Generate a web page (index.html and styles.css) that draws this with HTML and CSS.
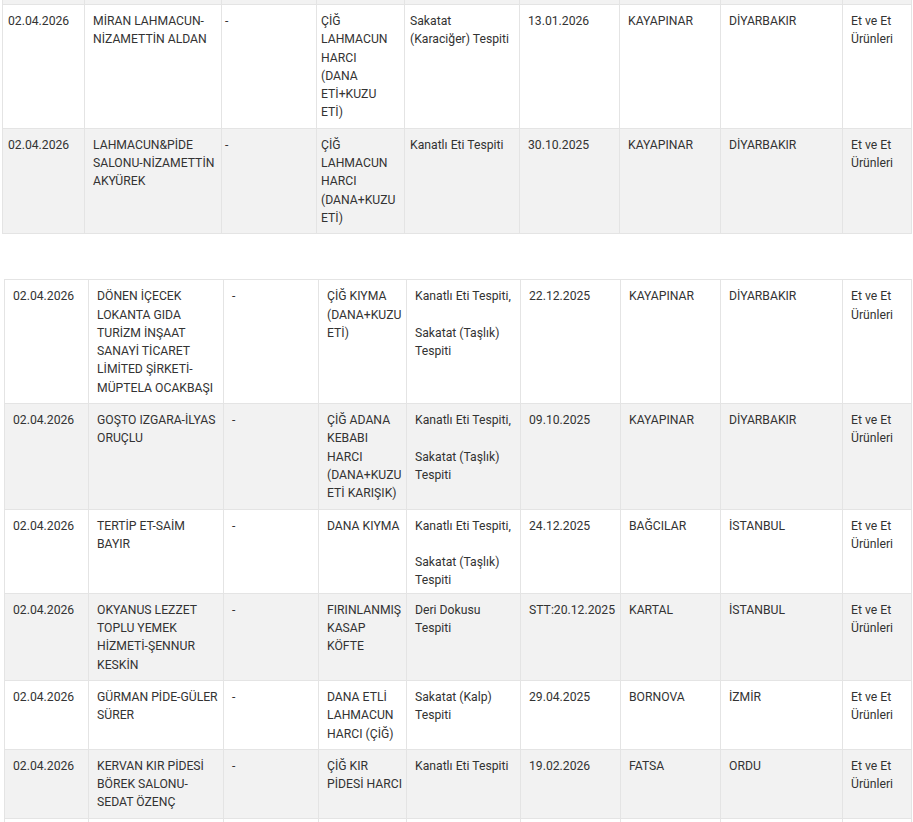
FILE: index.html
```html
<!DOCTYPE html>
<html lang="tr">
<head>
<meta charset="utf-8">
<title>Tablo</title>
<link rel="stylesheet" href="styles.css">
</head>
<body>
<div class="page">
  <table class="grid grid-top">
    <colgroup>
      <col class="w82"><col class="w137"><col class="w95"><col class="w88"><col class="w115"><col class="w100"><col class="w101"><col class="w122"><col class="w69">
    </colgroup>
    <tbody>
      <tr class="strip"><td></td><td></td><td></td><td></td><td></td><td></td><td></td><td></td><td></td></tr>
      <tr>
        <td>02.04.2026</td>
        <td>MİRAN LAHMACUN-<br>NİZAMETTİN ALDAN</td>
        <td class="dash">-</td>
        <td class="prod">ÇİĞ<br>LAHMACUN<br>HARCI<br>(DANA<br>ETİ+KUZU<br>ETİ)</td>
        <td class="res">Sakatat<br>(Karaciğer) Tespiti</td>
        <td>13.01.2026</td>
        <td>KAYAPINAR</td>
        <td>DİYARBAKIR</td>
        <td>Et ve Et<br>Ürünleri</td>
      </tr>
      <tr class="alt">
        <td>02.04.2026</td>
        <td>LAHMACUN&amp;PİDE<br>SALONU-NİZAMETTİN<br>AKYÜREK</td>
        <td class="dash">-</td>
        <td class="prod">ÇİĞ<br>LAHMACUN<br>HARCI<br>(DANA+KUZU<br>ETİ)</td>
        <td class="res">Kanatlı Eti Tespiti</td>
        <td>30.10.2025</td>
        <td>KAYAPINAR</td>
        <td>DİYARBAKIR</td>
        <td>Et ve Et<br>Ürünleri</td>
      </tr>
    </tbody>
  </table>

  <table class="grid grid-bottom">
    <colgroup>
      <col class="w84"><col class="w135"><col class="w95"><col class="w88"><col class="w114"><col class="w100"><col class="w100"><col class="w122"><col class="w69">
    </colgroup>
    <tbody>
      <tr>
        <td>02.04.2026</td>
        <td>DÖNEN İÇECEK<br>LOKANTA GIDA<br>TURİZM İNŞAAT<br>SANAYİ TİCARET<br>LİMİTED ŞİRKETİ-<br>MÜPTELA OCAKBAŞI</td>
        <td>-</td>
        <td>ÇİĞ KIYMA<br>(DANA+KUZU<br>ETİ)</td>
        <td>Kanatlı Eti Tespiti,<br><br>Sakatat (Taşlık)<br>Tespiti</td>
        <td>22.12.2025</td>
        <td>KAYAPINAR</td>
        <td>DİYARBAKIR</td>
        <td>Et ve Et<br>Ürünleri</td>
      </tr>
      <tr class="alt">
        <td>02.04.2026</td>
        <td>GOŞTO IZGARA-İLYAS<br>ORUÇLU</td>
        <td>-</td>
        <td>ÇİĞ ADANA<br>KEBABI<br>HARCI<br>(DANA+KUZU<br>ETİ KARIŞIK)</td>
        <td>Kanatlı Eti Tespiti,<br><br>Sakatat (Taşlık)<br>Tespiti</td>
        <td>09.10.2025</td>
        <td>KAYAPINAR</td>
        <td>DİYARBAKIR</td>
        <td>Et ve Et<br>Ürünleri</td>
      </tr>
      <tr class="tight">
        <td>02.04.2026</td>
        <td>TERTİP ET-SAİM<br>BAYIR</td>
        <td>-</td>
        <td>DANA KIYMA</td>
        <td>Kanatlı Eti Tespiti,<br><br>Sakatat (Taşlık)<br>Tespiti</td>
        <td>24.12.2025</td>
        <td>BAĞCILAR</td>
        <td>İSTANBUL</td>
        <td>Et ve Et<br>Ürünleri</td>
      </tr>
      <tr class="alt">
        <td>02.04.2026</td>
        <td>OKYANUS LEZZET<br>TOPLU YEMEK<br>HİZMETİ-ŞENNUR<br>KESKİN</td>
        <td>-</td>
        <td>FIRINLANMIŞ<br>KASAP<br>KÖFTE</td>
        <td>Deri Dokusu<br>Tespiti</td>
        <td>STT:20.12.2025</td>
        <td>KARTAL</td>
        <td>İSTANBUL</td>
        <td>Et ve Et<br>Ürünleri</td>
      </tr>
      <tr>
        <td>02.04.2026</td>
        <td>GÜRMAN PİDE-GÜLER<br>SÜRER</td>
        <td>-</td>
        <td>DANA ETLİ<br>LAHMACUN<br>HARCI (ÇİĞ)</td>
        <td>Sakatat (Kalp)<br>Tespiti</td>
        <td>29.04.2025</td>
        <td>BORNOVA</td>
        <td>İZMİR</td>
        <td>Et ve Et<br>Ürünleri</td>
      </tr>
      <tr class="alt">
        <td>02.04.2026</td>
        <td>KERVAN KIR PİDESİ<br>BÖREK SALONU-<br>SEDAT ÖZENÇ</td>
        <td>-</td>
        <td>ÇİĞ KIR<br>PİDESİ HARCI</td>
        <td>Kanatlı Eti Tespiti</td>
        <td>19.02.2026</td>
        <td>FATSA</td>
        <td>ORDU</td>
        <td>Et ve Et<br>Ürünleri</td>
      </tr>
      <tr class="tail"><td></td><td></td><td></td><td></td><td></td><td></td><td></td><td></td><td></td></tr>
    </tbody>
  </table>
</div>
</body>
</html>
```

FILE: styles.css
```css
html, body {
  margin: 0;
  padding: 0;
  background: #ffffff;
}

body {
  font-family: Roboto, "Liberation Sans", Arial, sans-serif;
  font-size: 12.2px;
  color: #333333;
  overflow: hidden;
}

.page {
  display: flex;
  flex-direction: column;
  gap: 45px;
}

.grid {
  border-collapse: collapse;
  table-layout: fixed;
}

.grid-top {
  width: 909px;
  margin-left: 2px;
}

.grid-bottom {
  width: 907px;
  margin-left: 4px;
}

.grid td {
  border: 1px solid #e4e4e4;
  padding: 7px 8px 6px 8px;
  vertical-align: top;
  line-height: 18.3px;
  white-space: nowrap;
  overflow: hidden;
}

.grid tr.alt td {
  background: #f2f2f2;
}

.grid tr.strip td {
  background: #f2f2f2;
  height: 4px;
  padding: 0;
  border-top: none;
}

.grid tr.tail td {
  height: 20px;
  padding: 0;
  border-bottom: none;
}

.grid tr.tight td {
  padding-bottom: 3px;
}

.grid-top td:first-child {
  padding-left: 5px;
}

.grid-top td.dash {
  padding-left: 3px;
}

.grid-top td.prod {
  padding-left: 4px;
}

.grid-top td.res {
  padding-left: 5px;
}

.w69 { width: 69px; }
.w82 { width: 82px; }
.w84 { width: 84px; }
.w88 { width: 88px; }
.w95 { width: 95px; }
.w100 { width: 100px; }
.w101 { width: 101px; }
.w114 { width: 114px; }
.w115 { width: 115px; }
.w122 { width: 122px; }
.w135 { width: 135px; }
.w137 { width: 137px; }
```
